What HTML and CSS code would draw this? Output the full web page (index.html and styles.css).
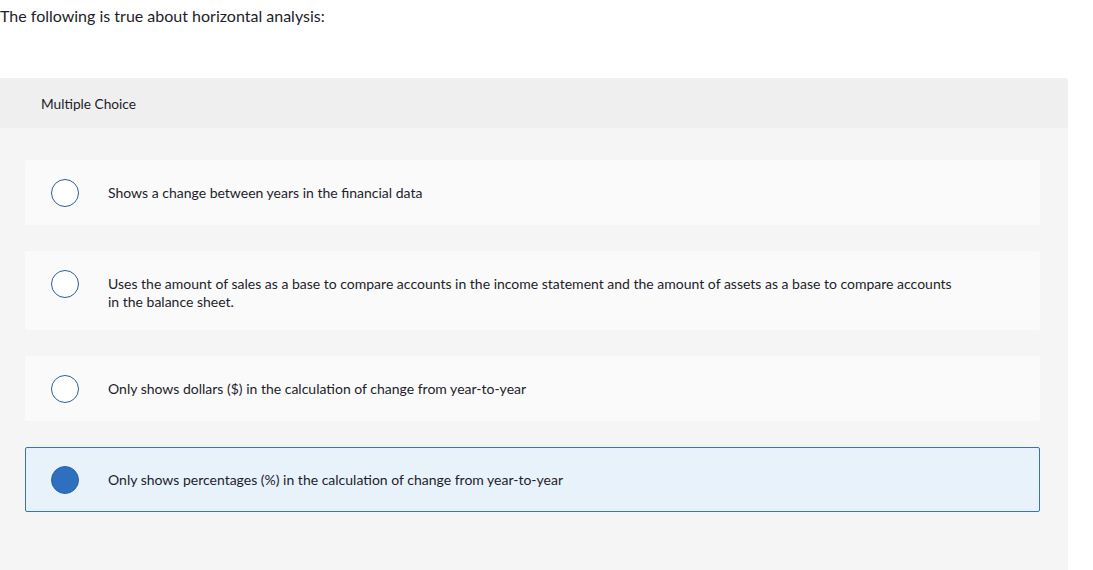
FILE: index.html
```html
<!DOCTYPE html>
<html>
<head>
<meta charset="utf-8">
<link rel="stylesheet" href="styles.css">
</head>
<body>
<p class="prompt">The following is true about horizontal analysis:</p>
<section class="panel">
  <div class="panel-head">Multiple Choice</div>
  <div class="options">
    <div class="option">
      <span class="radio"></span>
      <span class="label">Shows a change between years in the financial data</span>
    </div>
    <div class="option multi">
      <span class="radio"></span>
      <span class="label">Uses the amount of sales as a base to compare accounts in the income statement and the amount of assets as a base to compare accounts in the balance sheet.</span>
    </div>
    <div class="option">
      <span class="radio"></span>
      <span class="label">Only shows dollars ($) in the calculation of change from year-to-year</span>
    </div>
    <div class="option selected">
      <span class="radio"></span>
      <span class="label">Only shows percentages (%) in the calculation of change from year-to-year</span>
    </div>
  </div>
</section>
</body>
</html>
```
FILE: styles.css
```css
html, body {
  margin: 0;
  padding: 0;
  background: #ffffff;
}
body {
  font-family: "Lato", "Liberation Sans", sans-serif;
  color: #1d1d2b;
  width: 1093px;
  height: 570px;
  overflow: hidden;
}
.prompt {
  margin: 0;
  padding-top: 6px;
  font-size: 16px;
  line-height: 20px;
  height: 72px;
}
.panel {
  width: 1068px;
  background: #f5f5f5;
  border-top-right-radius: 3px;
  height: 500px;
}
.panel-head {
  background: #efefef;
  height: 50px;
  box-sizing: border-box;
  padding-left: 41px;
  display: flex;
  align-items: center;
  font-size: 13.7px;
  border-top-right-radius: 3px;
}
.options {
  padding: 32px 28px 0 25px;
  display: flex;
  flex-direction: column;
  gap: 25px;
}
.option {
  background: #fafafa;
  border: 1px solid #fafafa;
  border-radius: 2px;
  display: flex;
  align-items: flex-start;
  padding: 18px 40px 17px 25px;
  font-size: 14px;
  line-height: 18px;
}
.option.multi {
  padding-bottom: 18px;
}
.option + .option {
  margin-top: 1px;
}
.radio {
  flex: none;
  width: 28px;
  height: 28px;
  box-sizing: border-box;
  border: 1.5px solid #2d5f93;
  border-radius: 50%;
  background: #ffffff;
  margin-right: 29px;
}
.label {
  max-width: 852px;
  padding-top: 5px;
}
.selected {
  background: #e8f2fb;
  border-color: #3572c0;
}
.selected .radio {
  background: #2f6fbf;
  border-color: #2b64ad;
}
```
